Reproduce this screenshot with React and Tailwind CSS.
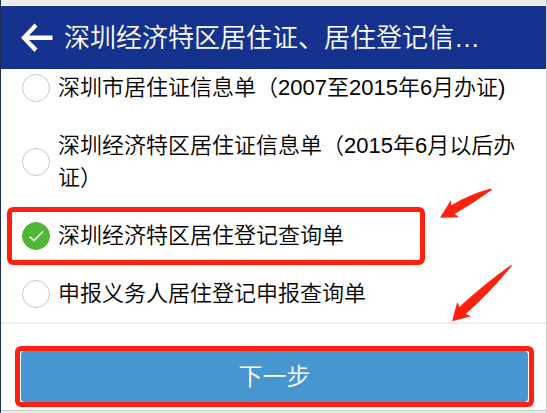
import { useState } from 'react'

const options = [
    { id: 'card-2007', label: '深圳市居住证信息单（2007至2015年6月办证)' },
    { id: 'card-2015', label: '深圳经济特区居住证信息单（2015年6月以后办证）' },
    { id: 'registration', label: '深圳经济特区居住登记查询单', marked: true },
    { id: 'declaration', label: '申报义务人居住登记申报查询单' },
]

function Header() {
    return (
        <header className="flex h-16 items-center gap-[11px] border-t border-white bg-[#16328f] pl-5 pr-14 text-white">
            <button type="button" aria-label="返回" className="shrink-0">
                <svg width="32" height="30" viewBox="0 0 32 30" fill="currentColor">
                    <path d="M13.5 0.5 16.5 3.5 8 12.5H31.5V17H8L16.5 25.5 13.5 29 0 14.8Z" />
                </svg>
            </button>
            <h1 className="truncate text-[26px] font-[350] leading-9">深圳经济特区居住证、居住登记信…</h1>
        </header>
    )
}

function Option({ option, checked, onSelect }) {
    return (
        <li className="relative">
            <label htmlFor={option.id} className="flex items-center gap-2 py-[13px] pl-[21px] pr-4">
                <span className="relative h-7 w-7 shrink-0">
                    <input
                        id={option.id}
                        type="radio"
                        name="document"
                        checked={checked}
                        onChange={onSelect}
                        className="block h-full w-full appearance-none rounded-full border border-[#c9c9c9] bg-white checked:border-[#51b636] checked:bg-[#51b636]"
                    />
                    {checked && (
                        <svg className="pointer-events-none absolute inset-0" width="28" height="28" viewBox="0 0 28 28" fill="none" stroke="white" strokeWidth="1.5">
                            <path d="M7.5 14.5 12 18.5 21 9.5" />
                        </svg>
                    )}
                </span>
                <span className="text-[22px] font-[350] leading-8">{option.label}</span>
            </label>

            {option.marked && (
                <>
                    <div className="pointer-events-none absolute inset-y-0 left-1.5 right-[121px] rounded-md border-[5px] border-[#ff2010]"></div>
                    <svg className="pointer-events-none absolute -top-5 right-[53px]" width="54" height="32" viewBox="0 0 54 32" fill="#ff2010">
                        <path d="M1 30.7 11.7 13.3 12.3 18.3Q31 7 52 1.5L53 2.7Q36 15 15.7 27L20 30.3Z" />
                    </svg>
                </>
            )}
        </li>
    )
}

function App() {
    const [selected, setSelected] = useState('registration')

    return (
        <div className="border-l border-r border-l-[#1f2d52] border-r-[#cfcfcf] bg-white font-['Liberation_Sans','Noto_Sans_CJK_SC',sans-serif] text-black">
            <div className="h-[5px] bg-[#ececec]"></div>
            <Header />

            <form onSubmit={e => e.preventDefault()}>
                {/* the list is scrolled a little under the header */}
                <div className="overflow-hidden">
                    <ul className="-mt-2.5">
                        {options.map(option => (
                            <Option
                                key={option.id}
                                option={option}
                                checked={selected === option.id}
                                onSelect={() => setSelected(option.id)}
                            />
                        ))}
                    </ul>
                </div>

                <div className="relative -mt-px border-b border-t-2 border-b-[#c8c8c8] border-t-[#eeeeee] px-3.5 pb-[3px] pt-[22px]">
                    <div className="rounded-md border-[5px] border-[#ff2010] px-px -mr-0.5">
                        <button type="submit" className="block h-[51px] w-full rounded-sm bg-[#4896cf] text-2xl font-[350] text-white">下一步</button>
                    </div>
                    <svg className="pointer-events-none absolute -top-15 right-[33px]" width="62" height="59" viewBox="0 0 62 59" fill="#ff2010">
                        <path d="M1 57.3 6.3 38 8.3 43Q33 20 60 1L60.7 2Q38 30 14.7 50L20 52.3Z" />
                    </svg>
                </div>
            </form>

            <div className="h-0.5 bg-[#ececec]"></div>
        </div>
    )
}

export default App
